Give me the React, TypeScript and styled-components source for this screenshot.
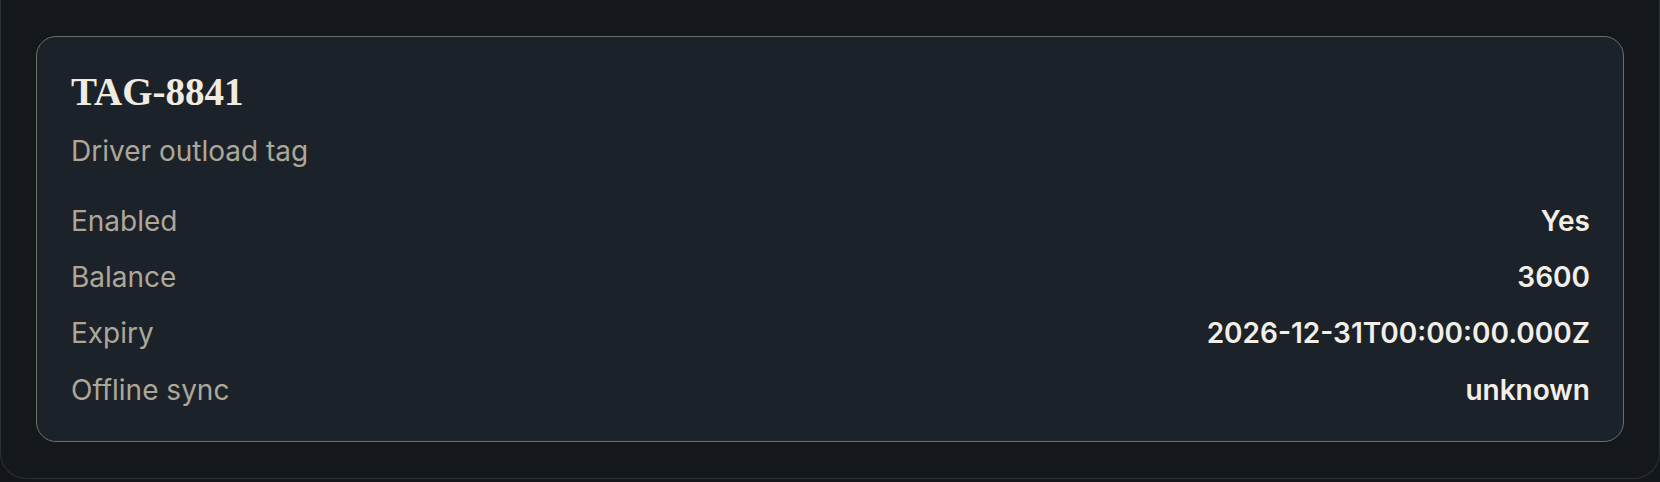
import React from 'react';
import styled, { createGlobalStyle } from 'styled-components';

const GlobalStyle = createGlobalStyle`
  html, body {
    margin: 0;
    padding: 0;
    background: #13161a;
  }
  * {
    box-sizing: border-box;
  }
`;

const Panel = styled.div`
  width: 1660px;
  padding: 36px 35px 36px;
  background: #14171b;
  border: 1px solid #2c3137;
  border-top: none;
  border-radius: 0 0 26px 26px;
`;

const Card = styled.section`
  display: flex;
  flex-direction: column;
  padding: 32px 33px 31px 34px;
  background: #1c222a;
  border: 1.5px solid #5e7862;
  border-radius: 20px;
`;

const Title = styled.h2`
  margin: 0;
  font-family: 'Liberation Serif', 'Times New Roman', serif;
  font-weight: 700;
  font-size: 39px;
  line-height: 1.2;
  color: #f2ece0;
`;

const Subtitle = styled.p`
  margin: 16px 0 0;
  font-family: Inter, 'Noto Sans', sans-serif;
  font-size: 28px;
  line-height: 1.4;
  color: #aea797;
`;

const Details = styled.dl`
  display: flex;
  flex-direction: column;
  gap: 17px;
  margin: 31px 0 0;
`;

const Row = styled.div`
  display: flex;
  justify-content: space-between;
  align-items: baseline;
  font-family: Inter, 'Noto Sans', sans-serif;
  font-size: 28px;
  line-height: 1.4;
`;

const Label = styled.dt`
  margin: 0;
  color: #aea797;
`;

const Value = styled.dd`
  margin: 0;
  font-weight: 600;
  color: #f4efe6;
`;

const rows: Array<[string, string]> = [
  ['Enabled', 'Yes'],
  ['Balance', '3600'],
  ['Expiry', '2026-12-31T00:00:00.000Z'],
  ['Offline sync', 'unknown']
];

function App(): JSX.Element {
  return (
    <>
      <GlobalStyle />
      <Panel>
        <Card>
          <Title>TAG-8841</Title>
          <Subtitle>Driver outload tag</Subtitle>
          <Details>
            {rows.map(([label, value]) => (
              <Row key={label}>
                <Label>{label}</Label>
                <Value>{value}</Value>
              </Row>
            ))}
          </Details>
        </Card>
      </Panel>
    </>
  );
}

export default App;
